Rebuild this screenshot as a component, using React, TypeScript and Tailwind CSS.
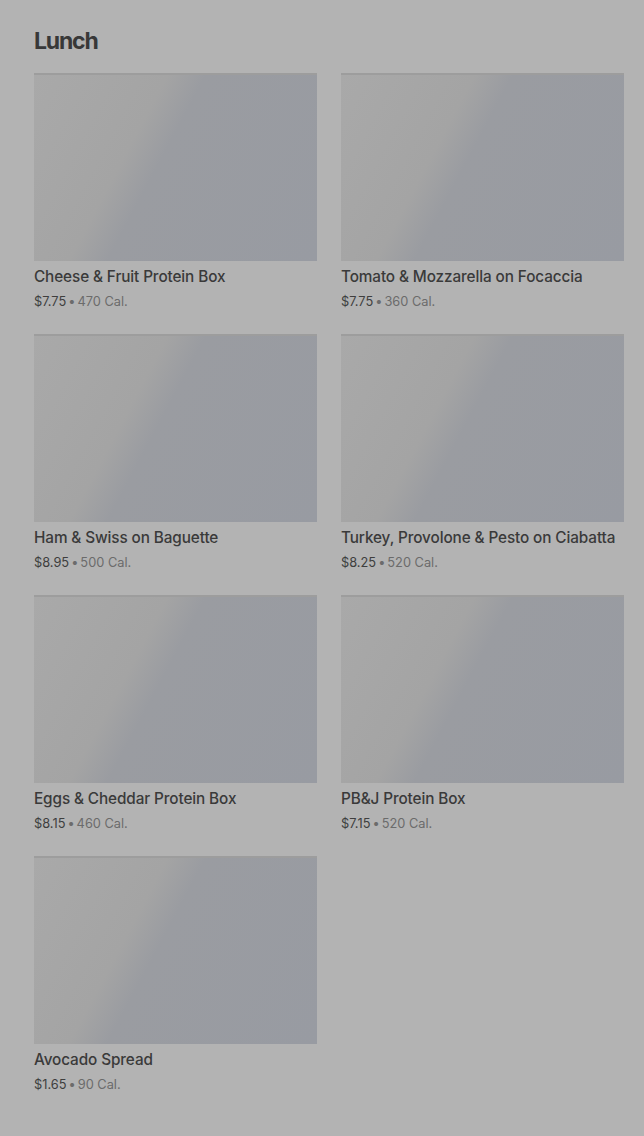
import React from "react";

const items = [
  { name: "Cheese & Fruit Protein Box", price: "$7.75", cal: "470 Cal." },
  { name: "Tomato & Mozzarella on Focaccia", price: "$7.75", cal: "360 Cal." },
  { name: "Ham & Swiss on Baguette", price: "$8.95", cal: "500 Cal." },
  { name: "Turkey, Provolone & Pesto on Ciabatta", price: "$8.25", cal: "520 Cal." },
  { name: "Eggs & Cheddar Protein Box", price: "$8.15", cal: "460 Cal." },
  { name: "PB&J Protein Box", price: "$7.15", cal: "520 Cal." },
  { name: "Avocado Spread", price: "$1.65", cal: "90 Cal." },
];

export default function App() {
  return (
    <div
      className="min-h-[1136px] w-full bg-[#b3b3b3] px-[34px] pt-[27px]"
      style={{ fontFamily: "Inter, 'Noto Sans', sans-serif" }}
    >
      <h1 className="text-[23px] leading-[29px] font-bold tracking-[-1.2px] text-[#383838]">Lunch</h1>
      <div className="mt-[17px] grid grid-cols-2 gap-x-6 gap-y-[22px] w-[590px]">
        {items.map((it) => (
          <div key={it.name} className="flex flex-col">
            <div className="h-[188px] w-[283px] bg-[linear-gradient(118deg,#a9a9a9_0%,#a4a4a4_35%,#9a9ca1_45%,#989ba2_100%)] border-t-2 border-[#9d9d9d]" />
            <div className="mt-[6px] text-[15.3px] leading-[20px] font-medium tracking-[-0.1px] text-[#3a3a3a] whitespace-nowrap">
              {it.name}
            </div>
            <div className="mt-[5px] text-[12.8px] leading-[20px] text-[#6b6b6b]">
              <span className="text-[#3e3e3e]">{it.price}</span>
              <span className="mx-[2px]">•</span>
              <span>{it.cal}</span>
            </div>
          </div>
        ))}
      </div>
    </div>
  );
}
